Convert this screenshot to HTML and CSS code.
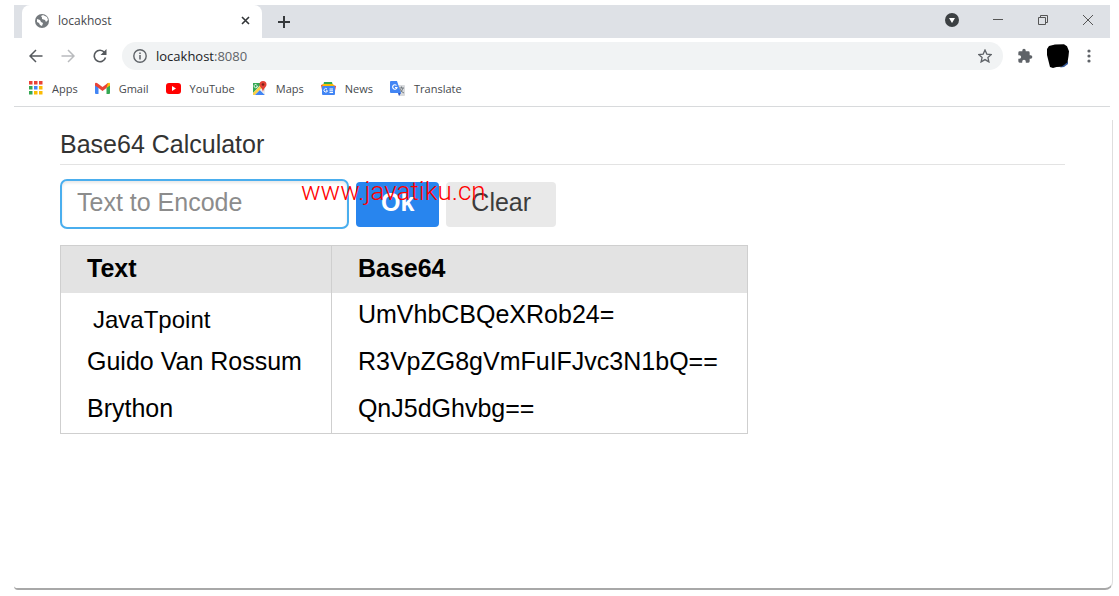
FILE: index.html
```html
<!DOCTYPE html>
<html lang="en">
<head>
  <meta charset="UTF-8" />
  <meta name="viewport" content="width=device-width, initial-scale=1.0" />
  <title>locakhost</title>
  <link rel="stylesheet" href="styles.css">
</head>
<body>
  <div class="window">
    <header class="browser">
      <div class="tab-bar">
        <div class="tab">
          <svg width="14" height="14" viewBox="0 0 14 14"><circle cx="7" cy="7" r="7" fill="#757a7e"/><path d="M2 5l3 1 1 2 2 1-1 3-2-1-1-2-2-1zM6 2l2-1 4 2 1 3-2 2-1-2-3-1V3.500z" fill="#fff"/></svg>
          <span class="tab-title">locakhost</span>
          <button class="icon-btn" aria-label="Close tab">
            <svg width="9" height="9" viewBox="0 0 9 9"><path d="M1 1l7 7M8 1L1 8" stroke="#333639" stroke-width="1.600"/></svg>
          </button>
        </div>
        <button class="icon-btn new-tab" aria-label="New tab">
          <svg width="12" height="12" viewBox="0 0 12 12"><path d="M6 0v12M0 6h12" stroke="#36393c" stroke-width="2"/></svg>
        </button>
        <div class="window-buttons">
          <button class="icon-btn" aria-label="Search tabs">
            <svg width="14" height="14" viewBox="0 0 14 14"><circle cx="7" cy="7" r="7" fill="#3c4043"/><path d="M4 5h6L7 10z" fill="#fff"/></svg>
          </button>
          <button class="icon-btn" aria-label="Minimize">
            <svg width="12" height="12" viewBox="0 0 12 12"><path d="M1 5.500h10" stroke="#555"/></svg>
          </button>
          <button class="icon-btn" aria-label="Restore">
            <svg width="12" height="12" viewBox="0 0 12 12"><path d="M1.500 3.500h7v7h-7zM3.500 3V1.500h7v7H9" fill="none" stroke="#555"/></svg>
          </button>
          <button class="icon-btn" aria-label="Close window">
            <svg width="12" height="12" viewBox="0 0 12 12"><path d="M1 1l10 10M11 1L1 11" stroke="#555"/></svg>
          </button>
        </div>
      </div>
      <div class="toolbar">
        <button class="icon-btn" aria-label="Back">
          <svg width="14" height="14" viewBox="0 0 14 14"><path d="M13.500 7H1.500M7 1L1 7l6 6" fill="none" stroke="#55595d" stroke-width="1.500"/></svg>
        </button>
        <button class="icon-btn" aria-label="Forward">
          <svg width="14" height="14" viewBox="0 0 14 14"><path d="M.5 7h12M7 1l6 6-6 6" fill="none" stroke="#b9bbbe" stroke-width="1.500"/></svg>
        </button>
        <button class="icon-btn" aria-label="Reload">
          <svg width="14" height="14" viewBox="0 0 14 14"><path d="M11.500 3.500A5.700 5.700 0 1 0 12.500 8.500" fill="none" stroke="#55595d" stroke-width="1.600"/><path d="M13.500 0v6H7.500z" fill="#55595d"/></svg>
        </button>
        <div class="address">
          <svg width="14" height="14" viewBox="0 0 14 14"><circle cx="7" cy="7" r="6.200" fill="none" stroke="#5f6368" stroke-width="1.400"/><path d="M7 6v4.500M7 3.500V5" stroke="#5f6368" stroke-width="1.500"/></svg>
          <span class="url">locakhost<span class="port">:8080</span></span>
          <button class="icon-btn" aria-label="Bookmark this page">
            <svg width="14" height="14" viewBox="0 0 14 14"><path d="M7 1l1.800 4.100 4.500.4-3.400 3 1 4.400L7 10.600l-3.900 2.300 1-4.400-3.400-3 4.500-.4z" fill="none" stroke="#5f6368" stroke-width="1.300"/></svg>
          </button>
        </div>
        <div class="actions">
          <button class="icon-btn" aria-label="Extensions">
            <svg width="16" height="16" viewBox="0 0 24 24"><path d="M20.500 11H19V7a2 2 0 0 0-2-2h-4V3.500a2.500 2.500 0 0 0-5 0V5H4a2 2 0 0 0-2 2v3.800h1.500a2.700 2.700 0 0 1 0 5.400H2V20a2 2 0 0 0 2 2h3.800v-1.500a2.700 2.700 0 0 1 5.400 0V22H17a2 2 0 0 0 2-2v-4h1.500a2.500 2.500 0 0 0 0-5z" fill="#5f6368"/></svg>
          </button>
          <button class="icon-btn" aria-label="Profile">
            <svg width="22" height="24" viewBox="0 0 22 24"><path d="M18 20l3-3v3l-4 3-4 .5z" fill="#355a9c"/><path d="M2 2l6-1.500 9-.3 3 2 2 5-.5 5-1 6-3 2.500-3 2-5 .3L6 24l-3-1-1-4L0 11V5z" fill="#000"/></svg>
          </button>
        </div>
        <button class="icon-btn" aria-label="Menu">
          <svg width="4" height="14" viewBox="0 0 4 14"><g fill="#5f6368"><circle cx="2" cy="2" r="1.600"/><circle cx="2" cy="7" r="1.600"/><circle cx="2" cy="12" r="1.600"/></g></svg>
        </button>
      </div>
      <nav class="bookmarks">
        <a href="#">
          <svg width="14" height="14" viewBox="0 0 14 14"><path d="M0 0h3.500v3.500H0zM5 0h3.500v3.500H5zM10 0h3.500v3.500H10z" fill="#ea4335"/><path d="M0 5h3.500v3.500H0zM0 10h3.500v3.500H0z" fill="#34a853"/><path d="M5 5h3.500v3.500H5z" fill="#4285f4"/><path d="M10 5h3.500v3.500H10zM10 10h3.500v3.500H10zM5 10h3.500v3.500H5z" fill="#fbbc04"/></svg>
          Apps
        </a>
        <a href="#">
          <svg width="15" height="12" viewBox="0 0 15 12"><path d="M0 2v9q0 1 1 1h2.500V4z" fill="#4285f4"/><path d="M15 2v9q0 1-1 1h-2.500V4z" fill="#34a853"/><path d="M11.500 2v4L15 3.500V2q0-2-2-1z" fill="#fbbc04"/><path d="M0 2q0-2 2-1l5.500 4L13 1l-1.500 5-4 3-4-3L0 3.500z" fill="#ea4335"/></svg>
          Gmail
        </a>
        <a href="#">
          <svg width="15" height="11" viewBox="0 0 15 11"><rect width="15" height="11" rx="3" fill="#f00"/><path d="M6 3l4 2.500L6 8z" fill="#fff"/></svg>
          YouTube
        </a>
        <a href="#">
          <svg width="15" height="15" viewBox="0 0 15 15"><path d="M1 2h12v12H1z" fill="#dfe3e7"/><path d="M1 2h9L1 12z" fill="#34a853"/><path d="M1 12L10 3l2 2-9 9H1z" fill="#fbd147"/><path d="M3 14l5-5 5 5z" fill="#4285f4"/><path d="M8 9l2-2 3 3v4z" fill="#eceff1"/><path d="M4.500 3.500a1.700 1.700 0 1 0 1 1.500H4" fill="none" stroke="#fff" stroke-width=".8"/><path d="M11 0a3.500 3.500 0 0 1 3.500 3.500C14.500 6 11.500 7 11 11 10.500 7 7.500 6 7.500 3.500A3.500 3.500 0 0 1 11 0z" fill="#e24034"/><circle cx="11" cy="3.500" r="1.300" fill="#7d1f18"/></svg>
          Maps
        </a>
        <a href="#">
          <svg width="15" height="13" viewBox="0 0 15 13"><path d="M0 3l3-1 1 5-3 1zM15 4l-3-1-1 5 3 1z" fill="#ea4335"/><path d="M3 0h8l1 4H2z" fill="#34a853"/><path d="M2 2h10l2 3H1z" fill="#fbbc04"/><rect x="1" y="4" width="13" height="9" rx="1" fill="#4285f4"/><path d="M6 7a1.800 1.800 0 1 0 .5 1.800H5M8.500 7H12M8.500 8.800H12M8.500 10.500H12" fill="none" stroke="#fff"/></svg>
          News
        </a>
        <a href="#">
          <svg width="15" height="15" viewBox="0 0 15 15"><path d="M6 4h8q1 0 1 1v9q0 1-1 1H9z" fill="#d8dadd"/><path d="M9 7h5M11.500 5.500V7M13 7q-1 4-4 5M10 8q1 3 4 4" fill="none" stroke="#6b7378" stroke-width=".9"/><path d="M1 0h6l4 12H1q-1 0-1-1V1q0-1 1-1z" fill="#4285f4"/><path d="M8 12h3l-2 3z" fill="#2a56c6"/><path d="M6.500 4.500A2.200 2.200 0 1 0 7 6.500H5" fill="none" stroke="#fff" stroke-width="1.100"/></svg>
          Translate
        </a>
      </nav>
    </header>
    <main class="page">
      <h1>Base64 Calculator</h1>
      <form class="encode-form">
        <input type="text" class="text-input" placeholder="Text to Encode" aria-label="Text to Encode" />
        <button type="button" class="btn btn-ok">Ok</button>
        <button type="button" class="btn btn-clear">Clear</button>
        <span class="watermark">www.javatiku.cn</span>
      </form>
      <table>
        <thead>
          <tr><th>Text</th><th>Base64</th></tr>
        </thead>
        <tbody>
          <tr><td class="narrow">JavaTpoint</td><td>UmVhbCBQeXRob24=</td></tr>
          <tr><td>Guido Van Rossum</td><td>R3VpZG8gVmFuIFJvc3N1bQ==</td></tr>
          <tr><td>Brython</td><td>QnJ5dGhvbg==</td></tr>
        </tbody>
      </table>
    </main>
  </div>
</body>
</html>
```
FILE: styles.css
```css
* {
  margin: 0;
  padding: 0;
  box-sizing: border-box;
}
body {
  background: #fff;
  padding: 5px 6px 6px 14px;
  font-family: "Open Sans", "Noto Sans", sans-serif;
  font-size: 12px;
  color: #46494d;
}
svg {
  display: block;
  flex: none;
}
.window {
  display: flex;
  flex-direction: column;
  min-height: calc(100vh - 11px);
}
.browser {
  margin-right: 3px;
  border-bottom: 1px solid #d8dadc;
}
.icon-btn {
  background: none;
  border: none;
  cursor: pointer;
}
.tab-bar {
  display: flex;
  align-items: center;
  height: 33px;
  padding-left: 8px;
  background: #dee1e6;
}
.tab {
  display: flex;
  align-items: center;
  gap: 9px;
  width: 240px;
  height: 33px;
  padding: 0 12px 2px 13px;
  background: #fff;
  border-radius: 8px 8px 0 0;
}
.tab-title {
  flex: 1;
}
.new-tab {
  margin-left: 16px;
}
.window-buttons {
  display: flex;
  align-items: center;
  gap: 33px;
  margin-left: auto;
  padding: 0 16px 4px 0;
}
.toolbar {
  display: flex;
  align-items: center;
  gap: 18px;
  height: 36px;
  padding: 0 19px 0 15px;
}
.address {
  display: flex;
  flex: 1;
  align-items: center;
  gap: 9px;
  height: 28px;
  margin: 0 -4px 0 -3px;
  padding: 0 11px;
  background: #f1f3f4;
  border-radius: 14px;
}
.url {
  flex: 1;
  font-size: 13px;
  color: #202124;
}
.port {
  color: #5f6368;
}
.actions {
  display: flex;
  align-items: center;
  gap: 14px;
}
.bookmarks {
  display: flex;
  align-items: center;
  gap: 17px;
  height: 32px;
  padding: 0 15px 4px;
}
.bookmarks a {
  display: flex;
  align-items: center;
  gap: 9px;
  font-size: 11px;
  color: #46494d;
  text-decoration: none;
}
.page {
  flex: 1;
  margin-top: 13px;
  padding: 8px 47px 0 46px;
  border-right: 1px solid #dedede;
  border-bottom: 2px solid #a8a8a8;
  border-radius: 0 0 8px 4px;
  font-family: "Liberation Sans", Arial, sans-serif;
  font-size: 25px;
  color: #000;
}
h1 {
  height: 37px;
  line-height: 32px;
  font-size: 25px;
  font-weight: normal;
  color: #333;
  border-bottom: 1px solid #e3e3e3;
}
.encode-form {
  position: relative;
  display: flex;
  align-items: center;
  gap: 7px;
  margin: 14px 0 16px;
}
.text-input {
  width: 289px;
  height: 50px;
  padding: 0 15px 4px;
  font: inherit;
  border: 2px solid #4aaeee;
  border-radius: 7px;
  box-shadow: inset 0 2px 3px #e8e8e8;
  outline: none;
}
.text-input::placeholder {
  color: #8c8c8c;
}
.btn {
  height: 45px;
  padding: 0 25px 4px;
  font: inherit;
  border: none;
  border-radius: 4px;
  cursor: pointer;
}
.btn-ok {
  background: #2885ee;
  color: #fff;
  font-weight: bold;
}
.btn-clear {
  background: #e9e9e9;
  color: #3c3c3c;
}
.watermark {
  position: absolute;
  top: -4px;
  left: 241px;
  line-height: 32px;
  font-family: Roboto, sans-serif;
  font-weight: 300;
  font-size: 26px;
  color: #f00;
}
table {
  border: 1px solid #cfcfcf;
  border-collapse: collapse;
}
th,
td {
  height: 47px;
  padding: 0 29px 4px 26px;
  line-height: 32px;
  text-align: left;
  border-right: 1px solid #cfcfcf;
}
th {
  padding-bottom: 2px;
  background: #e3e3e3;
}
.narrow {
  padding: 8px 0 0 32px;
  font-size: 24px;
}
```
